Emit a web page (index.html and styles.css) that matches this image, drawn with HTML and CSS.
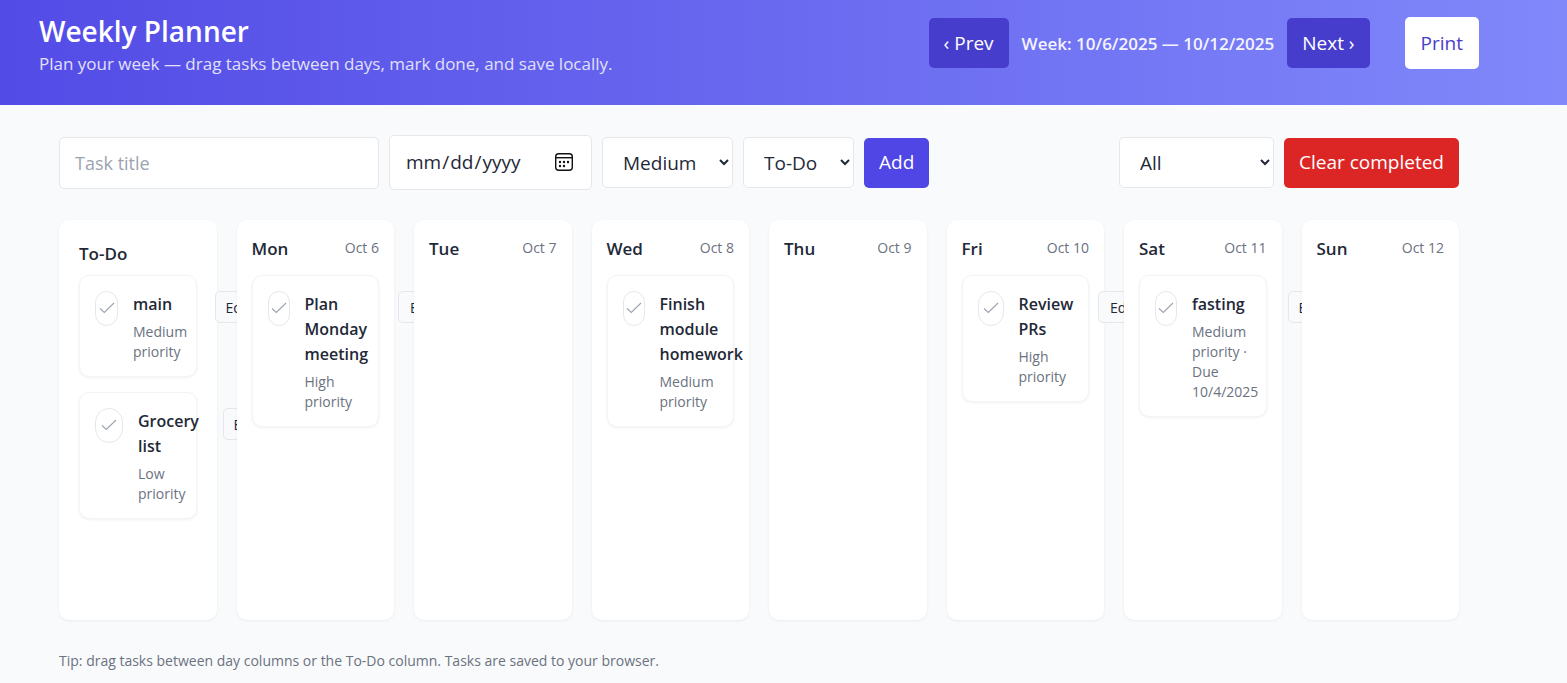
FILE: index.html
```html
<!DOCTYPE html>
<html lang="en">
<head>
<meta charset="utf-8">
<meta name="viewport" content="width=device-width, initial-scale=1">
<title>Weekly Planner</title>
<link rel="stylesheet" href="styles.css">
</head>
<body>
<svg class="sprite" aria-hidden="true">
  <symbol id="tick" viewBox="0 0 16 12"><path d="M1 6.5 5.3 10.5 15 1" fill="none" stroke="currentColor" stroke-width="1.1"/></symbol>
</svg>
<header class="header">
  <div class="header-inner">
    <div>
      <h1 class="title">Weekly Planner</h1>
      <p class="subtitle">Plan your week — drag tasks between days, mark done, and save locally.</p>
    </div>
    <div class="header-actions">
      <nav class="week-nav" aria-label="Week">
        <button class="btn btn-dark" type="button">‹ Prev</button>
        <span class="week">Week: 10/6/2025 — 10/12/2025</span>
        <button class="btn btn-dark" type="button">Next ›</button>
      </nav>
      <button class="btn btn-print" type="button">Print</button>
    </div>
  </div>
</header>
<main class="main">
  <form class="toolbar">
    <input class="field field-title" type="text" placeholder="Task title" aria-label="Task title">
    <div class="date-wrap">
      <input class="field field-date" type="date" aria-label="Due date">
      <svg class="date-icon" viewBox="0 0 20 20" aria-hidden="true"><rect x="1.7" y="1.7" width="16.6" height="16.6" rx="3" fill="none" stroke="#111" stroke-width="1.4"/><path d="M2 5.7h16" stroke="#111" stroke-width="1.4"/><g fill="#111"><circle cx="6" cy="10" r="1.2"/><circle cx="10" cy="10" r="1.2"/><circle cx="14" cy="10" r="1.2"/><circle cx="6" cy="14" r="1.2"/><circle cx="10" cy="14" r="1.2"/></g></svg>
    </div>
    <select class="field select-priority" aria-label="Priority"><option>Low</option><option selected>Medium</option><option>High</option></select>
    <select class="field select-day" aria-label="Column"><option>To-Do</option><option>Mon</option><option>Tue</option></select>
    <button class="btn btn-add" type="button">Add</button>
    <select class="field select-filter" aria-label="Filter"><option>All</option><option>Done</option></select>
    <button class="btn btn-clear" type="button">Clear completed</button>
  </form>
  <div class="board">
    <section class="column column-todo">
      <div class="column-head"><h2 class="day">To-Do</h2></div>
      <article class="card card-main">
        <button class="check" type="button" aria-label="Mark done"><svg class="tick"><use href="#tick"/></svg></button>
        <div class="card-body"><h3 class="task">main</h3><p class="meta">Medium<br>priority</p></div>
        <button class="edit" type="button">Edit</button>
      </article>
      <article class="card card-grocery">
        <button class="check" type="button" aria-label="Mark done"><svg class="tick"><use href="#tick"/></svg></button>
        <div class="card-body"><h3 class="task">Grocery<br>list</h3><p class="meta">Low<br>priority</p></div>
        <button class="edit" type="button">Edit</button>
      </article>
    </section>
    <section class="column">
      <div class="column-head"><h2 class="day">Mon</h2><span class="date">Oct 6</span></div>
      <article class="card card-meeting">
        <button class="check" type="button" aria-label="Mark done"><svg class="tick"><use href="#tick"/></svg></button>
        <div class="card-body"><h3 class="task">Plan<br>Monday<br>meeting</h3><p class="meta">High<br>priority</p></div>
        <button class="edit" type="button">Edit</button>
      </article>
    </section>
    <section class="column">
      <div class="column-head"><h2 class="day">Tue</h2><span class="date">Oct 7</span></div>
    </section>
    <section class="column">
      <div class="column-head"><h2 class="day">Wed</h2><span class="date">Oct 8</span></div>
      <article class="card card-homework">
        <button class="check" type="button" aria-label="Mark done"><svg class="tick"><use href="#tick"/></svg></button>
        <div class="card-body"><h3 class="task">Finish<br>module<br>homework</h3><p class="meta">Medium<br>priority</p></div>
      </article>
    </section>
    <section class="column">
      <div class="column-head"><h2 class="day">Thu</h2><span class="date">Oct 9</span></div>
    </section>
    <section class="column">
      <div class="column-head"><h2 class="day">Fri</h2><span class="date">Oct 10</span></div>
      <article class="card card-review">
        <button class="check" type="button" aria-label="Mark done"><svg class="tick"><use href="#tick"/></svg></button>
        <div class="card-body"><h3 class="task">Review<br>PRs</h3><p class="meta">High<br>priority</p></div>
        <button class="edit" type="button">Edit</button>
      </article>
    </section>
    <section class="column">
      <div class="column-head"><h2 class="day">Sat</h2><span class="date">Oct 11</span></div>
      <article class="card card-fasting">
        <button class="check" type="button" aria-label="Mark done"><svg class="tick"><use href="#tick"/></svg></button>
        <div class="card-body"><h3 class="task">fasting</h3><p class="meta">Medium<br>priority ·<br>Due<br>10/4/2025</p></div>
        <button class="edit" type="button">Edit</button>
      </article>
    </section>
    <section class="column">
      <div class="column-head"><h2 class="day">Sun</h2><span class="date">Oct 12</span></div>
    </section>
  </div>
  <p class="tip">Tip: drag tasks between day columns or the To-Do column. Tasks are saved to your browser.</p>
</main>
</body>
</html>
```
FILE: styles.css
```css
*, *::before, *::after { box-sizing: border-box; }
body {
  margin: 0;
  background: #f9fafb;
  color: #1f2937;
  font-family: "Segoe UI", "Open Sans", "Noto Sans", sans-serif;
  font-size: 19px;
  line-height: 25px;
  overflow-x: hidden;
}
h1, h2, h3, p { margin: 0; }
button, input, select { font: inherit; }
.sprite { position: absolute; width: 0; height: 0; }

.header { background: linear-gradient(90deg, #534be6, #8088fa); color: #fff; }
.header-inner {
  display: flex;
  justify-content: space-between;
  align-items: flex-start;
  max-width: 1440px;
  min-height: 105px;
  margin: 0 88px 0 39px;
  padding: 13px 0;
}
.title { font-size: 28px; line-height: 37px; font-weight: 600; }
.subtitle { font-size: 17px; line-height: 28px; color: #e0e0fb; }
.header-actions { display: flex; align-items: center; gap: 35px; padding-top: 4px; }
.week-nav { display: flex; align-items: center; gap: 13px; }
.week { font-size: 17px; font-weight: 600; white-space: nowrap; color: #f4f4fe; }

.btn {
  height: 50px;
  padding: 0 15px;
  border: 0;
  border-radius: 5px;
  color: #fff;
  white-space: nowrap;
}
.btn-dark { background: #473dcd; }
.btn-print { height: 52px; padding: 0 16px; background: #fff; color: #473dcd; }
.btn-add { background: #4f46e5; }
.btn-clear { background: #dc2626; }

.main { max-width: 1400px; margin: 0 108px 0 59px; padding: 30px 0 10px; }
.toolbar { display: flex; align-items: center; gap: 10px; }
.field {
  height: 51px;
  border: 1px solid #e5e7eb;
  border-radius: 5px;
  background: #fff;
  color: #1f2937;
}
.field-title { width: 320px; height: 52px; padding: 0 15px; font-size: 18px; }
.field-title::placeholder { color: #9ca3af; opacity: 1; }
.date-wrap { position: relative; }
.field-date { display: block; width: 203px; height: 55px; padding: 0 15px; }
.field-date::-webkit-calendar-picker-indicator { opacity: 0; }
.date-icon { position: absolute; right: 18px; top: 17px; width: 20px; height: 20px; pointer-events: none; }
select.field { padding: 0 0 0 16px; }
.select-priority { width: 131px; }
.select-day { width: 111px; }
.select-filter { width: 155px; margin-left: auto; }

.board { display: grid; grid-template-columns: repeat(8, minmax(0, 1fr)); gap: 20px; margin-top: 30px; }
.column {
  position: relative;
  display: flex;
  flex-direction: column;
  gap: 15px;
  min-height: 400px;
  padding: 15px;
  border-radius: 10px;
  background: #fff;
  box-shadow: 0 1px 3px rgba(0, 0, 0, 0.06);
}
.column-todo { padding: 20px; }
.column-head { display: flex; justify-content: space-between; height: 25px; }
.column-todo .column-head { margin-bottom: -5px; }
.day { font-size: 17px; line-height: 27px; font-weight: 600; }
.date { font-size: 14px; color: #6b7280; }

.card {
  display: flex;
  align-items: flex-start;
  gap: 15px;
  padding: 15px;
  border: 1px solid #f3f4f6;
  border-radius: 10px;
  background: #fff;
  box-shadow: 0 1px 3px rgba(0, 0, 0, 0.06);
}
.check {
  display: flex;
  flex: none;
  align-items: center;
  justify-content: center;
  width: 22px;
  height: 35px;
  padding: 0 0 2px;
  border: 1px solid #e5e7eb;
  border-radius: 14px;
  background: #fff;
  color: #9ca3af;
}
.tick { flex: none; width: 16px; height: 12px; }
.card-body { flex: none; width: 68px; padding-top: 1px; margin-bottom: -1px; }
.task { font-size: 16px; line-height: 25px; font-weight: 600; }
.meta { margin-top: 5px; font-size: 14px; line-height: 20px; color: #6b7280; }
.edit {
  flex: none;
  width: 50px;
  height: 32px;
  padding: 0;
  border: 1px solid #e5e7eb;
  border-radius: 5px;
  background: #f9fafb;
  color: #1f2937;
  font-size: 14px;
}
.card-main .check { width: 23px; }
.card-main .card-body { width: 67px; }
.card-grocery .check { width: 28px; }
.card-grocery .card-body { width: 70px; }
.card-meeting .card-body { width: 78px; }
.card-review .check { width: 26px; }
.card-review .card-body { width: 64px; }
.card-fasting .card-body { width: 81px; }
.column-todo .edit,
.card-fasting .edit { width: 46px; }

.tip { margin-top: 28px; font-size: 14px; color: #6b7280; }
```
